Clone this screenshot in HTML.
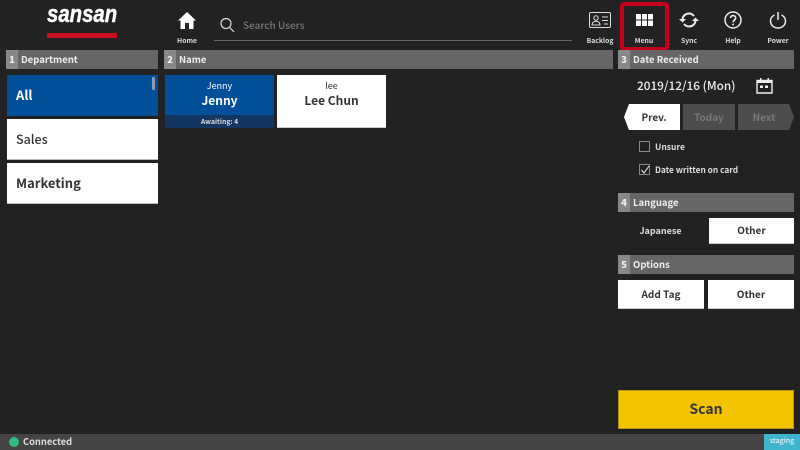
<!DOCTYPE html>
<html><head><meta charset="utf-8">
<style>
html,body{margin:0;padding:0;width:800px;height:450px;overflow:hidden;background:#222;}
body{position:relative;font-family:"Noto Sans CJK JP","Liberation Sans",sans-serif;font-weight:500;color:#fff;}
.a{position:absolute;box-sizing:border-box;}
.c{text-align:center;}
.hdr{background:#666;height:19px;color:#eee;font-size:9.500px;line-height:18px;font-weight:bold;}
.hdr b{position:absolute;left:0;top:0;width:12px;height:19px;background:#888;text-align:center;}
.hdr span{position:absolute;left:15px;top:0;white-space:nowrap;}
.btn{background:#fff;color:#333;text-align:center;font-size:10px;font-weight:bold;border-bottom:1px solid #ccc;}
.lab{font-size:6.800px;color:#ddd;text-align:center;width:50px;top:35px;line-height:10px;font-weight:bold;}
.dep{left:7px;width:151px;height:41px;background:#fff;color:#333;font-size:13px;line-height:39px;padding-left:9px;border-bottom:1px solid #bbb;}
</style></head><body>

<div class="a" style="left:47px;top:5px;width:72px;font-family:'Liberation Sans',sans-serif;font-weight:bold;font-size:21px;line-height:24px;font-style:italic;transform:scale(.97,1.15);transform-origin:0 100%;-webkit-text-stroke:.4px #fff;">sansan</div>
<div class="a" style="left:47px;top:33px;width:70px;height:5px;background:#c9101e;"></div>

<svg class="a" style="left:177px;top:11px" width="20" height="19" viewBox="0 0 20 19"><path d="M10 1L1 9.500h2.500V18h4.500v-6h4v6h4.500V9.500H19z" fill="#fff"/></svg>
<div class="a lab" style="left:162px;">Home</div>

<svg class="a" style="left:220px;top:17px" width="15" height="16" viewBox="0 0 15 16"><circle cx="6" cy="6.500" r="5" fill="none" stroke="#ddd" stroke-width="1.200"/><path d="M9.700 10.500L14 15" stroke="#ddd" stroke-width="1.200"/></svg>
<div class="a" style="left:243px;top:18px;font-size:10px;line-height:14px;color:#777;">Search Users</div>
<div class="a" style="left:214px;top:40px;width:358px;height:1px;background:#666;"></div>

<svg class="a" style="left:589px;top:11px" width="22" height="18" viewBox="0 0 22 18" fill="none" stroke="#ddd"><rect x=".5" y="1.500" width="21" height="15" rx="1"/><circle cx="7" cy="7" r="2.200"/><path d="M3 14c0-5 8-5 8 0zM13 6h6M13 9.500h6M15 13h4"/></svg>
<div class="a lab" style="left:575px;">Backlog</div>

<div class="a" style="left:620px;top:2px;width:49px;height:49px;border:4px solid #c4001a;border-radius:4px;"></div>
<svg class="a" style="left:636px;top:14px" width="17" height="12" viewBox="0 0 17 12" fill="#fff"><rect width="5" height="5.500"/><rect x="6" width="5" height="5.500"/><rect x="12" width="5" height="5.500"/><rect y="6.500" width="5" height="5.500"/><rect x="6" y="6.500" width="5" height="5.500"/><rect x="12" y="6.500" width="5" height="5.500"/></svg>
<div class="a lab" style="left:619px;">Menu</div>

<svg class="a" style="left:679px;top:11px" width="20" height="18" viewBox="0 0 20 18" fill="none" stroke="#eee" stroke-width="2"><path d="M3.500 8C4 4.500 7 2.500 10 2.500c2 0 3.500.8 5 2.500M16.500 10c-.5 3.500-3.500 5.500-6.500 5.500-2 0-3.500-.8-5-2.500"/><path d="M0 8h7l-3.500 3.500zM13 10h7l-3.500-3.500z" fill="#eee" stroke="none"/></svg>
<div class="a lab" style="left:664px;">Sync</div>

<svg class="a" style="left:724px;top:11px" width="18" height="18" viewBox="0 0 18 18" fill="none" stroke="#eee"><circle cx="9" cy="9" r="8" stroke-width="1.500"/><path d="M6.500 7C6.500 3.800 11.700 3.800 11.700 7c0 2-2.600 2-2.600 4.200" stroke-width="1.600"/><circle cx="9" cy="13.500" r="1" fill="#eee" stroke="none"/></svg>
<div class="a lab" style="left:708px;">Help</div>

<svg class="a" style="left:769px;top:11px" width="18" height="18" viewBox="0 0 18 18" fill="none" stroke="#eee" stroke-width="1.500"><path d="M5.500 4C2.500 5.500 1.500 8 1.500 10c0 4 3.300 7 7.500 7s7.500-3 7.500-7c0-2-1-4.500-4-6M9 1v8"/></svg>
<div class="a lab" style="left:753px;">Power</div>

<div class="a hdr" style="left:6px;top:50px;width:152px;"><b>1</b><span>Department</span></div>
<div class="a hdr" style="left:164px;top:50px;width:449px;"><b>2</b><span>Name</span></div>
<div class="a hdr" style="left:618px;top:50px;width:176px;"><b>3</b><span>Date Received</span></div>

<div class="a dep" style="top:75px;background:#004f98;color:#fff;border:0;height:41px;font-weight:bold;">All</div>
<div class="a" style="left:152px;top:77px;width:3px;height:13px;background:#8c9bb0;border-radius:1px;"></div>
<div class="a dep" style="top:119px;font-size:12.500px;">Sales</div>
<div class="a dep" style="top:163px;font-weight:bold;">Marketing</div>

<div class="a c" style="left:165px;top:75px;width:109px;height:53px;background:#004f98;">
  <div class="a" style="left:0;top:5px;width:109px;font-size:9px;font-weight:normal;line-height:11px;">Jenny</div>
  <div class="a" style="left:0;top:18px;width:109px;font-size:12px;line-height:16px;font-weight:bold;">Jenny</div>
  <div class="a" style="left:0;top:40px;width:109px;height:13px;background:#12365f;font-size:6.800px;line-height:13px;color:#ddd;font-weight:bold;">Awaiting: 4</div>
</div>
<div class="a c" style="left:277px;top:75px;width:109px;height:53px;background:#fff;color:#333;border-bottom:1px solid #ccc;">
  <div class="a" style="left:0;top:5px;width:109px;font-size:9px;font-weight:normal;line-height:11px;">lee</div>
  <div class="a" style="left:0;top:18px;width:109px;font-size:12px;line-height:16px;font-weight:bold;">Lee Chun</div>
</div>

<div class="a" style="left:637px;top:78px;font-size:11.800px;line-height:16px;color:#eee;white-space:nowrap;">2019/12/16 (Mon)</div>
<svg class="a" style="left:756px;top:77px" width="17" height="17" viewBox="0 0 17 17"><path d="M1 3.500h15v12.500H1z" fill="none" stroke="#eee" stroke-width="1.400"/><rect x="1" y="3" width="15" height="3" fill="#eee"/><rect x="4" y="1" width="1.500" height="3" fill="#eee"/><rect x="11.500" y="1" width="1.500" height="3" fill="#eee"/><rect x="4" y="8.500" width="3" height="2.500" fill="#eee"/><rect x="9" y="8.500" width="3" height="2.500" fill="#eee"/></svg>

<svg class="a" style="left:624px;top:104px" width="170" height="26" viewBox="0 0 170 26"><path d="M5 0h51v26H5L0 13z" fill="#fff"/><rect x="59" width="52" height="26" fill="#4d4d4d"/><path d="M114 0h51l5 13-5 13h-51z" fill="#4d4d4d"/></svg>
<div class="a c" style="left:629px;top:104px;width:50px;font-size:10px;line-height:26px;color:#333;font-weight:bold;">Prev.</div>
<div class="a c" style="left:683px;top:104px;width:52px;font-size:10px;line-height:26px;color:#777;font-weight:bold;">Today</div>
<div class="a c" style="left:738px;top:104px;width:52px;font-size:10px;line-height:26px;color:#777;font-weight:bold;">Next</div>

<div class="a" style="left:639px;top:141px;width:11px;height:11px;border:1px solid #888;"></div>
<div class="a" style="left:655px;top:142px;font-size:8.500px;line-height:11px;color:#ddd;font-weight:bold;">Unsure</div>
<div class="a" style="left:639px;top:164px;width:11px;height:11px;border:1px solid #888;"></div>
<svg class="a" style="left:640px;top:165px" width="10" height="10" viewBox="0 0 10 10"><path d="M1.500 5l2.500 3 5-7" fill="none" stroke="#eee"/></svg>
<div class="a" style="left:655px;top:165px;font-size:8.300px;line-height:11px;color:#ddd;white-space:nowrap;font-weight:bold;">Date written on card</div>

<div class="a hdr" style="left:618px;top:193px;width:176px;"><b>4</b><span>Language</span></div>
<div class="a c" style="left:618px;top:218px;width:85px;font-size:9px;line-height:25px;color:#ddd;font-weight:bold;">Japanese</div>
<div class="a btn" style="left:709px;top:218px;width:85px;height:26px;line-height:24px;">Other</div>

<div class="a hdr" style="left:618px;top:255px;width:176px;"><b>5</b><span>Options</span></div>
<div class="a btn" style="left:618px;top:280px;width:86px;height:29px;line-height:28px;">Add Tag</div>
<div class="a btn" style="left:708px;top:280px;width:86px;height:29px;line-height:28px;">Other</div>

<div class="a c" style="left:618px;top:390px;width:176px;height:39px;background:#f4c300;border:1px solid #b89410;color:#333;font-size:14px;line-height:37px;font-weight:bold;">Scan</div>

<div class="a" style="left:0;top:434px;width:800px;height:16px;background:#444;"></div>
<div class="a" style="left:9px;top:437px;width:10px;height:10px;border-radius:50%;background:#2ebd7f;"></div>
<div class="a" style="left:23px;top:434px;font-size:9.300px;line-height:14px;color:#ddd;font-weight:bold;">Connected</div>
<div class="a c" style="left:764px;top:434px;width:36px;height:16px;background:#3fb4cd;font-size:7px;line-height:15px;font-weight:500;color:#e8f6fa;">staging</div>

</body></html>
